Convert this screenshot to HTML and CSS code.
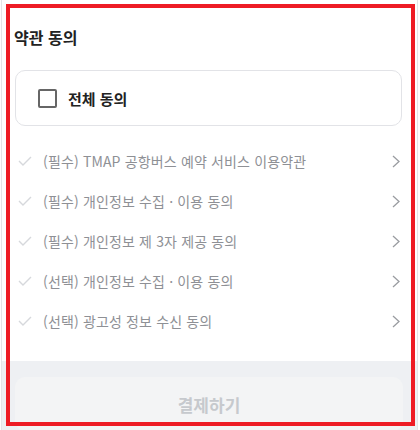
FILE: index.html
```html
<!DOCTYPE html>
<html lang="ko">
<head>
<meta charset="UTF-8" />
<title>약관 동의</title>
<link rel="stylesheet" href="styles.css">
</head>
<body>

<div class="page">
  <h2 class="title">약관 동의</h2>

  <label class="all-box">
    <span class="checkbox"></span>
    <span class="all-label">전체 동의</span>
  </label>

  <ul class="terms">
    <li class="term">
      <svg class="check" width="14" height="10" viewBox="0 0 14 10"><path d="M1 5 L5 9 L13 1" fill="none" stroke="#d6d8dc" stroke-width="1.4"/></svg>
      <span class="term-text">(필수) TMAP 공항버스 예약 서비스 이용약관</span>
      <svg class="chev" width="8" height="13" viewBox="0 0 8 13"><path d="M1 1 L7 6.5 L1 12" fill="none" stroke="#9a9ca1" stroke-width="1.3"/></svg>
    </li>
    <li class="term">
      <svg class="check" width="14" height="10" viewBox="0 0 14 10"><path d="M1 5 L5 9 L13 1" fill="none" stroke="#d6d8dc" stroke-width="1.4"/></svg>
      <span class="term-text">(필수) 개인정보 수집 · 이용 동의</span>
      <svg class="chev" width="8" height="13" viewBox="0 0 8 13"><path d="M1 1 L7 6.5 L1 12" fill="none" stroke="#9a9ca1" stroke-width="1.3"/></svg>
    </li>
    <li class="term">
      <svg class="check" width="14" height="10" viewBox="0 0 14 10"><path d="M1 5 L5 9 L13 1" fill="none" stroke="#d6d8dc" stroke-width="1.4"/></svg>
      <span class="term-text">(필수) 개인정보 제 3자 제공 동의</span>
      <svg class="chev" width="8" height="13" viewBox="0 0 8 13"><path d="M1 1 L7 6.5 L1 12" fill="none" stroke="#9a9ca1" stroke-width="1.3"/></svg>
    </li>
    <li class="term">
      <svg class="check" width="14" height="10" viewBox="0 0 14 10"><path d="M1 5 L5 9 L13 1" fill="none" stroke="#d6d8dc" stroke-width="1.4"/></svg>
      <span class="term-text">(선택) 개인정보 수집 · 이용 동의</span>
      <svg class="chev" width="8" height="13" viewBox="0 0 8 13"><path d="M1 1 L7 6.5 L1 12" fill="none" stroke="#9a9ca1" stroke-width="1.3"/></svg>
    </li>
    <li class="term">
      <svg class="check" width="14" height="10" viewBox="0 0 14 10"><path d="M1 5 L5 9 L13 1" fill="none" stroke="#d6d8dc" stroke-width="1.4"/></svg>
      <span class="term-text">(선택) 광고성 정보 수신 동의</span>
      <svg class="chev" width="8" height="13" viewBox="0 0 8 13"><path d="M1 1 L7 6.5 L1 12" fill="none" stroke="#9a9ca1" stroke-width="1.3"/></svg>
    </li>
  </ul>

  <div class="footer">
    <button class="pay" disabled>결제하기</button>
  </div>
</div>

<div class="frame"></div>

</body>
</html>
```

FILE: styles.css
```css
body {
  margin: 0;
  font-family: "Noto Sans CJK KR", "Noto Sans", sans-serif;
  background: #fff;
}
.page {
  margin: 0 2px 0 1px;
  border-left: 1px solid #e4e5e8;
  border-right: 1px solid #e4e5e8;
  height: 430px;
  overflow: hidden;
}
.title {
  margin: 0;
  padding: 26px 0 0 12px;
  font-size: 16px;
  font-weight: 700;
  line-height: 22px;
  color: #222;
}
.all-box {
  display: flex;
  align-items: center;
  margin: 22px 15px 0 13px;
  height: 54px;
  padding-left: 22px;
  border: 1px solid #e2e3e7;
  border-radius: 10px;
}
.checkbox {
  width: 15px;
  height: 15px;
  border: 2px solid #666;
  border-radius: 2px;
}
.all-label {
  margin-left: 11px;
  font-size: 15px;
  font-weight: 700;
  color: #222;
}
.terms {
  list-style: none;
  margin: 15px 0 0;
  padding: 0 17px 0 16px;
}
.term {
  display: flex;
  align-items: center;
  height: 40px;
}
.check {
  flex-shrink: 0;
}
.term-text {
  flex: 1;
  margin-left: 11px;
  font-size: 14px;
  letter-spacing: 0.15px;
  color: #8e9095;
}
.footer {
  margin-top: 20px;
  background: #eef0f3;
  padding: 16px 14px 0 13px;
  height: 80px;
}
.pay {
  display: block;
  width: 100%;
  height: 54px;
  border: none;
  border-radius: 10px;
  background: #f3f4f5;
  color: #c6c9cd;
  font-family: inherit;
  font-size: 17px;
  font-weight: 700;
}
.frame {
  position: absolute;
  left: 6px;
  top: 4px;
  width: 401px;
  height: 414px;
  border: 4px solid #ee1c25;
  pointer-events: none;
}
```
